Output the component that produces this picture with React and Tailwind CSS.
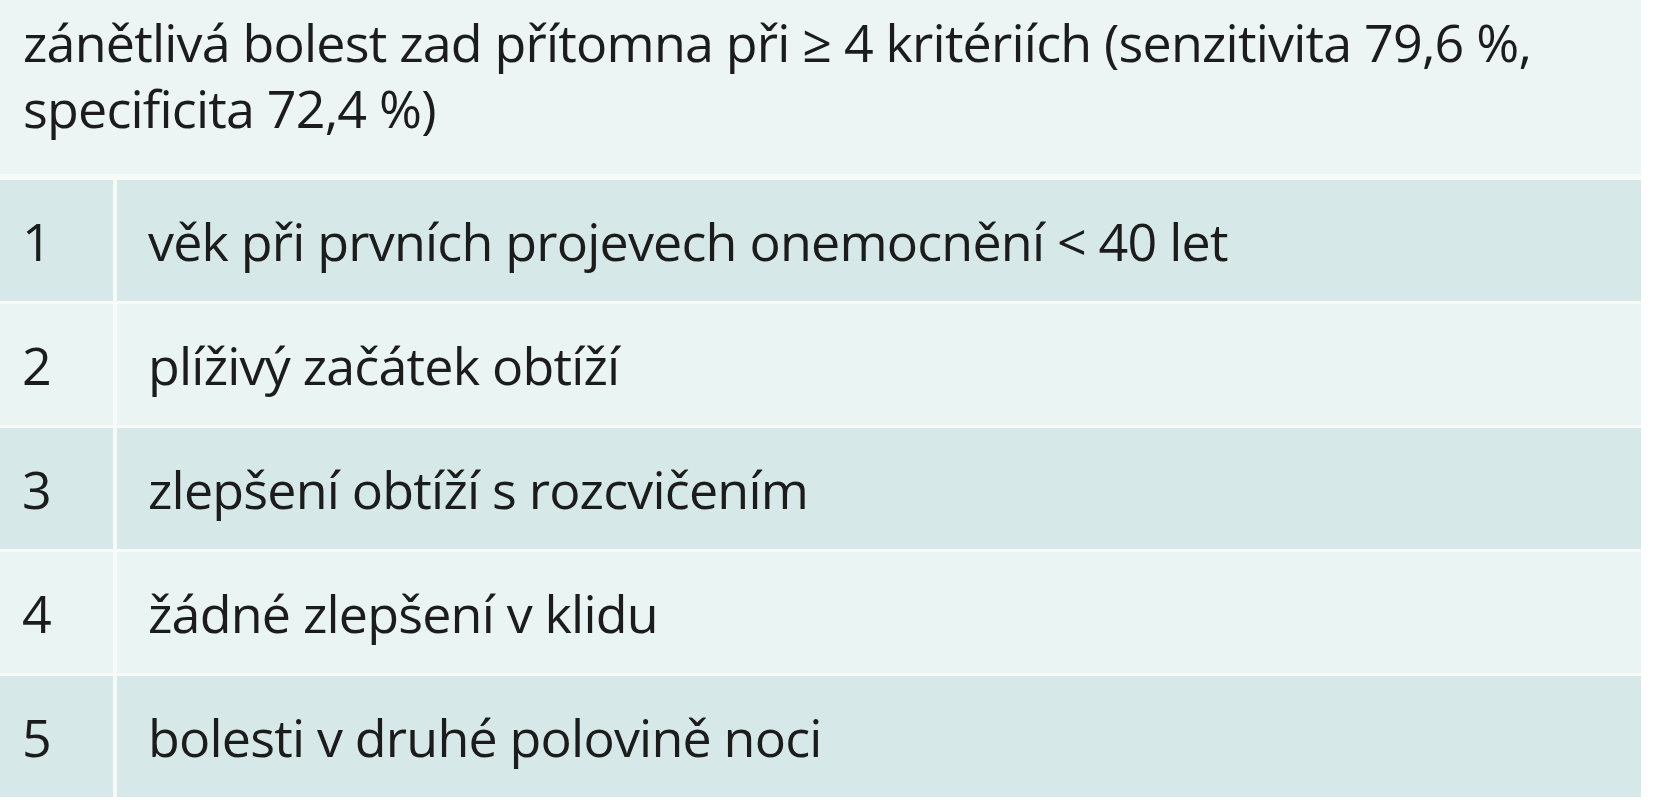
const rows = [
  ['1', 'věk při prvních projevech onemocnění < 40 let', 'dark'],
  ['2', 'plíživý začátek obtíží', 'light'],
  ['3', 'zlepšení obtíží s rozcvičením', 'dark'],
  ['4', 'žádné zlepšení v klidu', 'light'],
  ['5', 'bolesti v druhé polovině noci', 'dark'],
];

export default function App() {
  return (
    <div className="h-[800px] w-[1654px] overflow-hidden bg-white font-['Open_Sans',sans-serif] text-[#1c1c1c]">
      <div className="flex w-[1641px] flex-col bg-[#f6fbfa]">
        <div className="h-[174px] bg-[#ecf5f4] px-[23px] pt-[9px] text-[52px] leading-[66px] tracking-[-0.8px]">
          zánětlivá bolest zad přítomna při ≥ 4 kritériích (senzitivita 79,6 %,
          <br />
          specificita 72,4 %)
        </div>
        <div className="mt-[6px] flex flex-col gap-[3px]">
          {rows.map(([num, text, tone]) => (
            <div
              key={num}
              className={
                'flex h-[121px] items-center text-[52px] tracking-[-0.8px] ' +
                (tone === 'dark' ? 'bg-[#d6e9e8]' : 'bg-[#eaf4f3]')
              }
            >
              <div className="flex h-full w-[113px] items-center pl-[22px]">{num}</div>
              <div className="h-full w-[4px] bg-[#f6fbfa]" />
              <div className="pl-[31px]">{text}</div>
            </div>
          ))}
        </div>
      </div>
    </div>
  );
}
